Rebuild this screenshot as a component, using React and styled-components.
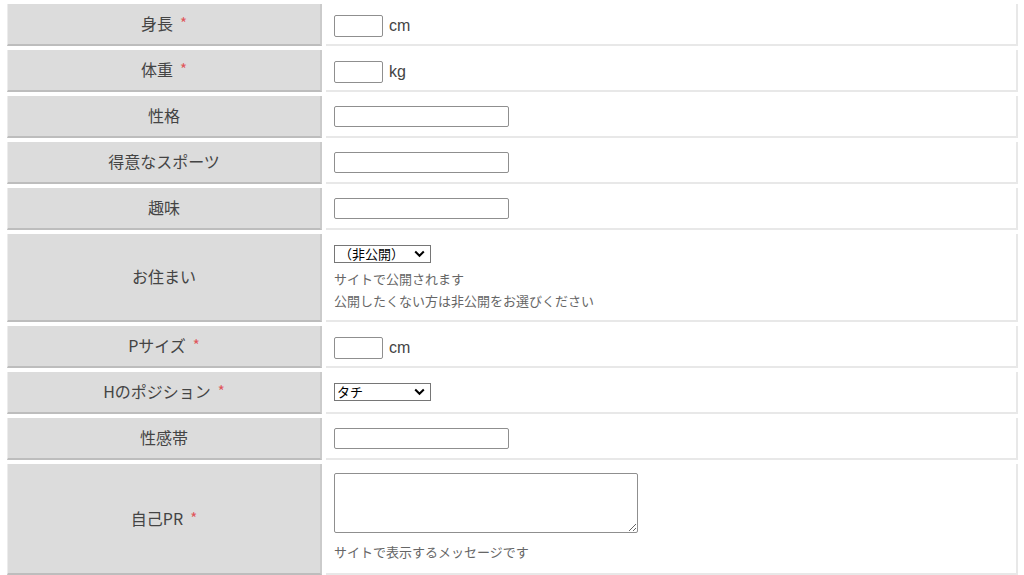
import React from 'react'
import styled, { createGlobalStyle } from 'styled-components'

const GlobalStyle = createGlobalStyle`
  html, body {
    margin: 0;
    padding: 0;
    background: #fff;
  }
  body {
    font-family: 'Noto Sans CJK JP', 'Noto Sans', sans-serif;
    color: #444;
  }
`

const Form = styled.div`
  display: grid;
  grid-template-columns: 315px 1fr;
  column-gap: 4px;
  row-gap: 4px;
  margin: -2px 6px 0 7px;
`

const Label = styled.div`
  background: #dcdcdc;
  border-left: 1px solid #ececec;
  border-right: 2px solid #cbcbcb;
  border-bottom: 2px solid #bdbdbd;
  display: flex;
  align-items: center;
  justify-content: center;
  font-size: 16px;
  line-height: 20px;
  padding-bottom: ${(props) => (props.$sliver ? '0' : '2px')};
  color: #444;
  min-height: ${(props) => (props.$sliver ? '0' : '38px')};
`

const Value = styled.div`
  background: #fff;
  border-right: 2px solid #e8e8e8;
  border-bottom: 2px solid #e8e8e8;
  display: flex;
  flex-direction: column;
  justify-content: center;
  align-items: flex-start;
  padding: ${(props) => (props.$sliver ? '0' : props.$pad || '0 8px')};
  min-height: ${(props) => (props.$sliver ? '0' : '40px')};
`

const Required = styled.span`
  color: #e0565b;
  margin-left: 7px;
  font-size: 15px;
`

const Line = styled.div`
  display: flex;
  align-items: center;
  gap: 6px;
  margin-top: 4px;
  font-family: 'Liberation Sans', 'Noto Sans CJK JP', sans-serif;
  font-size: 16px;
  color: #444;
`

const TextInput = styled.input`
  box-sizing: border-box;
  width: ${(props) => props.$width || '175px'};
  height: ${(props) => props.$height || '21px'};
  border: 1px solid #8f8f8f;
  border-radius: 2px;
  padding: 1px 2px;
  margin: 0;
  font-size: 13px;
  background: #fff;
`

const SelectWrap = styled.div`
  position: relative;
  display: inline-flex;
  width: 97px;
  height: 18px;
`

const Select = styled.select`
  box-sizing: border-box;
  appearance: none;
  width: 100%;
  height: 100%;
  border: 1px solid #767676;
  border-radius: 0;
  padding: 0 20px 0 ${(props) => props.$indent || '2px'};
  margin: 0;
  font-family: 'Noto Sans CJK JP', sans-serif;
  font-size: 13px;
  line-height: 16px;
  color: #000;
  background: #fff;
`

const Chevron = styled.svg`
  position: absolute;
  right: 6px;
  top: 5px;
  width: 11px;
  height: 8px;
  pointer-events: none;
`

const TextArea = styled.textarea`
  box-sizing: border-box;
  display: block;
  width: 304px;
  height: 60px;
  border: 1px solid #8f8f8f;
  border-radius: 2px;
  margin: 0;
  font-size: 13px;
`

const Note = styled.p`
  margin: ${(props) => props.$top || '0'} 0 0;
  font-size: 13px;
  line-height: 22px;
  color: #666;
`

function FieldLabel({ children, required }) {
  return (
    <Label>
      {children}
      {required && <Required>*</Required>}
    </Label>
  )
}

function Dropdown({ value, label, indent }) {
  return (
    <SelectWrap>
      <Select defaultValue={value} $indent={indent}>
        <option value={value}>{label}</option>
      </Select>
      <Chevron viewBox="0 0 11 8">
        <path d="M1.2 1.5 L5.5 5.8 L9.8 1.5" fill="none" stroke="#000" strokeWidth="2" />
      </Chevron>
    </SelectWrap>
  )
}

export default function App() {
  return (
    <>
      <GlobalStyle />
      <Form>
        <Label $sliver />
        <Value $sliver />

        <FieldLabel required>身長</FieldLabel>
        <Value>
          <Line>
            <TextInput $width="49px" $height="22px" />
            cm
          </Line>
        </Value>

        <FieldLabel required>体重</FieldLabel>
        <Value>
          <Line>
            <TextInput $width="49px" $height="22px" />
            kg
          </Line>
        </Value>

        <FieldLabel>性格</FieldLabel>
        <Value>
          <TextInput />
        </Value>

        <FieldLabel>得意なスポーツ</FieldLabel>
        <Value>
          <TextInput />
        </Value>

        <FieldLabel>趣味</FieldLabel>
        <Value>
          <TextInput />
        </Value>

        <FieldLabel>お住まい</FieldLabel>
        <Value $pad="11px 8px 8px">
          <Dropdown value="" label="（非公開）" indent="4px" />
          <Note $top="5px">サイトで公開されます</Note>
          <Note>公開したくない方は非公開をお選びください</Note>
        </Value>

        <FieldLabel required>Pサイズ</FieldLabel>
        <Value>
          <Line>
            <TextInput $width="49px" $height="22px" />
            cm
          </Line>
        </Value>

        <FieldLabel required>Hのポジション</FieldLabel>
        <Value>
          <Dropdown value="tachi" label="タチ" />
        </Value>

        <FieldLabel>性感帯</FieldLabel>
        <Value>
          <TextInput />
        </Value>

        <FieldLabel required>自己PR</FieldLabel>
        <Value $pad="9px 8px 10px">
          <TextArea />
          <Note $top="8px">サイトで表示するメッセージです</Note>
        </Value>
      </Form>
    </>
  )
}
